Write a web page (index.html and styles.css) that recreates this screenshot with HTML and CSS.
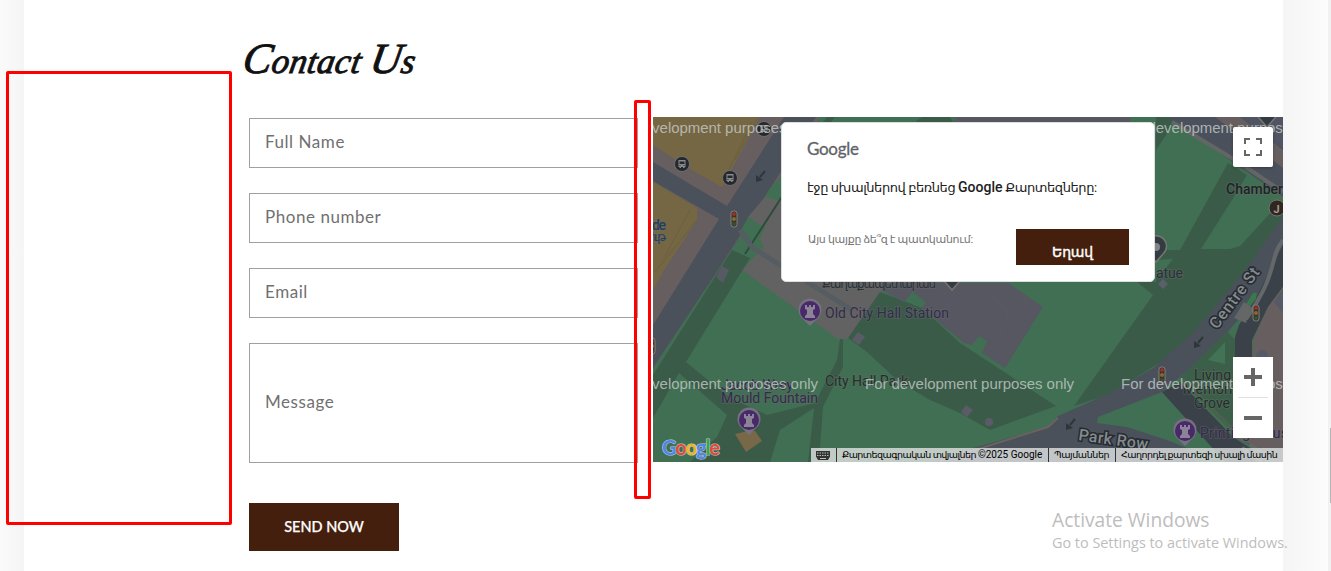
FILE: index.html
```html
<!DOCTYPE html>
<html lang="en">
<head>
<meta charset="utf-8">
<title>Contact Us</title>
<link rel="stylesheet" href="styles.css">
</head>
<body>
<div class="shell">
  <div class="gutter gutter-left"></div>
  <main class="page">
    <h1 class="title"><span class="cap">C</span>ontact <span class="cap">U</span>s</h1>
    <div class="contact">
      <form class="form">
        <input class="field" type="text" placeholder="Full Name">
        <input class="field" type="text" placeholder="Phone number">
        <input class="field" type="text" placeholder="Email">
        <input class="field field-message" type="text" placeholder="Message">
        <button class="send" type="button">SEND NOW</button>
      </form>
      <section class="map">
        <svg class="canvas" viewBox="653 117 630 345" width="630" height="345">
          <defs>
            <g id="rook"><path d="M0 15 L-7 8 A11.5 11.5 0 1 1 7 8Z" fill="#77707f"/><circle r="10" fill="#482a6b"/><path d="M-5-6h2v2h2v-2h2v2h2v-2h2v4l-2 1v4l2 2v2h-10v-2l2-2v-4l-2-1z" fill="#8c8396"/></g>
            <g id="bus"><circle r="7.5" fill="#25292f" stroke="#777" stroke-width=".8"/><path d="M-3.500-4h7v7h-1v1h-1.500v-1h-2v1h-1.500v-1h-1z" fill="#8b8b8b"/><path d="M-2.500-2.500h5v2.500h-5zM-2.500 1h1v1h-1zM1.500 1h1v1h-1z" fill="#25292f"/></g>
            <g id="light"><rect x="-3" y="-8" width="6" height="16" rx="2.500" fill="#333" stroke="#8b8174"/><circle cy="-5" r="2" fill="#913330"/><circle r="2" fill="#8b6b20"/><circle cy="5" r="2" fill="#37503d"/></g>
            <g id="arrow"><path d="M5-6L0 0" fill="none" stroke="#30353b" stroke-width="2"/><path d="M-4-2L-4 5L3 3Z" fill="#30353b"/></g>
            <g id="pin"><path d="M0 15 L-7 7 A10.500 10.500 0 1 1 7 7Z" fill="#343c43" stroke="#77756f" stroke-width="1.500"/><circle r="4" fill="#858585"/></g>
          </defs>
          <rect x="653" y="117" width="630" height="345" fill="#416f53"/>

          <path d="M653 117H820L653 368Z" fill="#675f5f"/>
          <path d="M653 117H760L722 187L697 173L653 145ZM653 182L697 208V220L664 270L653 290Z" fill="#766744"/>
          <path d="M735 160L758 117M725 178L752 122M664 258L690 210M655 272L697 220" stroke="#6b603f" fill="none"/>
          <path d="M784 117H816L718 270L653 368V325L719 219L653 181V162L727 206Z" fill="#4a515b"/>
          <path d="M922 117H950L953 122H915ZM835 117L831 122H823L827 117Z" fill="#3b5b49"/>
          <path d="M957 117H1130V122H953Z" fill="#565761"/>
          <path d="M781 178L748 217L764 247L742 270L838 339H850L880 292L940 282V170Z" fill="#626262"/>
          <path d="M770 188L781 178V201L765 197ZM748 217L765 228L756 245L740 232Z" fill="#416f53"/>
          <path d="M745 254L783 195" stroke="#2f4b3b" stroke-width="2"/>
          <path d="M740 230L752 247L780 265L852 310" fill="none" stroke="#555d62" stroke-width="5"/>
          <path d="M732 250L750 258L686 362L730 398L767 415L815 403L837 360L840 339H843V367L823 407L819 462H808L814 408L780 430L770 462H690L717 437L727 415L679 373L653 418V375Z" fill="#3b5b49"/>
          <path d="M722 266L729 270L723 283L716 277Z" fill="#575a62"/>
          <path d="M848 338L880 292L922 308L960 343L1056 406L990 430L960 413L930 400L897 380L867 352Z" fill="#3b5b49"/>
          <path d="M882 283H1008L1043 307L1005 368L982 353L987 341L979 336L972 345L964 343L922 308L926 302L913 292L904 302L882 290Z" fill="#565761"/>
          <path d="M1020 290L1031 309L1005 350M990 295L1008 313L998 340" fill="none" stroke="#5a5a64"/>
          <path d="M858 332L865 337L859 345L852 340ZM966 405L973 410L967 417L961 412Z" fill="#595c66"/><circle cx="989" cy="422" r="4" fill="#595c66"/>
          <path d="M1228 163L1180 250H1156V282H1137L1153 295L1074 406L1110 394L1203 335L1283 240V213L1275 208L1240 246L1230 249H1201L1232 200L1247 175Z" fill="#3b5b49"/>
          <path d="M1156 117H1178L1156 150Z" fill="#3b5b49"/>
          <path d="M1156 260L1173 259L1161 274H1156Z" fill="#416f53"/>
          <path d="M1168 117H1283V197Z" fill="#4b515c"/>
          <path d="M1215 117H1240L1283 150V168Z" fill="#675f5f"/>
          <path d="M1240 117H1283V149Z" fill="#505463"/>
          <path d="M1172 122L1240 163L1283 192" fill="none" stroke="#626664" stroke-width="4"/>
          <path d="M1283 217L1245 270L1193 333L1153 368L1110 393L1058 416L1048 427L973 448L930 462H1195L1187 448L1167 440L1127 427L1097 423L1098 417L1162 392L1185 373L1223 337L1283 270Z" fill="#4a515b"/>
          <path d="M940 461L1048 427L1058 418" fill="none" stroke="#6b6260" stroke-width="2"/>
          <path d="M1180 378L1227 331L1240 345V437Z" fill="#3c5f4a"/>
          <path d="M1162 392L1180 382L1233 437L1250 448L1265 462H1225Z" fill="#3a4149"/>
          <path d="M1183 380L1236 433L1275 462" fill="none" stroke="#48624f" stroke-width="4"/>
          <path d="M1242 448L1262 462M1250 444L1275 462" fill="none" stroke="#686664" stroke-width="4"/>
          <path d="M1283 245L1255 300L1239 325L1235 337V357H1252V340L1268 307L1283 287Z" fill="#3a4149"/>
          <path d="M1283 287L1268 307L1253 340V357H1235V438L1262 448L1278 462H1283Z" fill="#675f5f"/>
          <path d="M1283 289L1274 302L1283 313Z" fill="#565966"/><circle cx="1262" cy="356" r="6" fill="#565966"/>
          <path d="M1208 360L1225 342V364Z" fill="#427354"/>
          <path d="M1283 240C1268 260 1280 270 1246 319" fill="none" stroke="#65686a" stroke-width="4"/>
          <path d="M1246 304L1253 293L1257 293L1256 299L1250 306Z" fill="#38794e"/><path d="M1234 318L1244 302L1251 307L1246 323Z" fill="#646766"/>
          <path d="M748 431L755 431L762 441L746 452L735 434Z" fill="#786848"/>
          <path d="M1163 279L1168 284L1163 289L1158 284Z" fill="#5c5e6c"/>

          <use href="#bus" x="764" y="129"/><use href="#bus" x="682" y="164"/><use href="#bus" x="730" y="178"/>
          <use href="#light" x="734" y="219"/><use href="#light" x="1162" y="375"/><use href="#light" x="1256" y="313"/><use href="#light" x="652" y="346"/>
          <use href="#arrow" x="760" y="177"/><use href="#arrow" x="1198" y="343"/><use href="#arrow" x="1070" y="425"/>
          <use href="#pin" x="1156" y="247"/><use href="#pin" x="952" y="275"/><use href="#pin" x="1267" y="112"/>
          <use href="#rook" x="810" y="311"/><use href="#rook" x="749" y="420"/><use href="#rook" x="1185" y="431"/>
          <circle cx="1277" cy="208" r="8" fill="#302820" stroke="#77716b"/><text x="1273.500" y="213" class="label letter">J</text>

          <text x="646" y="230" class="label blue" textLength="20">ade</text>
          <text x="643" y="241" class="label blue armenian" textLength="23">րութ</text>
          <text x="822" y="288" class="label armenian" textLength="114">Քաղաքապետարան</text>
          <text x="825" y="318" class="label violet" textLength="124">Old City Hall Station</text>
          <text x="825" y="386" class="label dark" textLength="83">City Hall Park</text>
          <text x="721" y="390" class="label violet" textLength="72">Jacob Wrey</text>
          <text x="721" y="403" class="label violet" textLength="97">Mould Fountain</text>
          <text x="1226" y="194" class="label strong" textLength="57">Chamber</text>
          <text x="1156" y="278" class="label" textLength="27">atue</text>
          <text x="1194" y="380" class="label dark" textLength="37">Living</text>
          <text x="1183" y="394" class="label dark" textLength="61">Memorial</text>
          <text x="1194" y="408" class="label dark" textLength="36">Grove</text>
          <text x="1200" y="438" class="label violet" textLength="88">Printing Hous</text>
          <text transform="translate(1217 330) rotate(-53)" class="label street" textLength="72">Centre St</text>
          <text transform="translate(1078 440) rotate(8)" class="label street" textLength="70">Park Row</text>

          <g class="watermark">
            <text x="609" y="132.500" textLength="209">For development purposes only</text>
            <text x="865" y="132.500" textLength="209">For development purposes only</text>
            <text x="1121" y="132.500" textLength="209">For development purposes only</text>
            <text x="609" y="388.500" textLength="209">For development purposes only</text>
            <text x="865" y="388.500" textLength="209">For development purposes only</text>
            <text x="1121" y="388.500" textLength="209">For development purposes only</text>
          </g>
          <text x="662" y="455" class="google-mark" textLength="58"><tspan fill="#4f85ee">G</tspan><tspan fill="#e2493d">o</tspan><tspan fill="#f0b41c">o</tspan><tspan fill="#4f85ee">g</tspan><tspan fill="#35a456">l</tspan><tspan fill="#e2493d">e</tspan></text>
        </svg>

        <div class="dialog">
          <div class="dialog-logo">Google</div>
          <p class="dialog-text">էջը սխալներով բեռնեց <b>Google</b> Քարտեզները:</p>
          <div class="dialog-actions">
            <span class="dialog-link">Այս կայքը ձե՞զ է պատկանում:</span>
            <button class="dialog-ok" type="button">Եղավ</button>
          </div>
        </div>
        <button class="fullscreen" type="button" aria-label="Fullscreen">
          <svg width="18" height="18" viewBox="0 0 18 18"><path d="M0 0h6v2H2v4H0zM12 0h6v6h-2V2h-4zM0 12h2v4h4v2H0zM16 12h2v6h-6v-2h4z" fill="#666"/></svg>
        </button>
        <div class="zoom">
          <button class="zoom-btn" type="button" aria-label="Zoom in"><svg width="18" height="18" viewBox="0 0 18 18"><path d="M7 0h4v7h7v4h-7v7H7v-7H0V7h7z" fill="#666"/></svg></button>
          <div class="zoom-rule"></div>
          <button class="zoom-btn" type="button" aria-label="Zoom out"><svg width="18" height="4" viewBox="0 0 18 4"><path d="M0 0h18v4H0z" fill="#666"/></svg></button>
        </div>
        <div class="credits">
          <span class="credit keys"><svg width="14" height="9" viewBox="0 0 14 9"><path d="M0 0h14v5.500l-2 3.500H2L0 5.500z" fill="#333"/><path d="M1 2h12M1 4.500h12" stroke="#b9c1be" stroke-dasharray="1.500 1"/><path d="M4 7.500h6" stroke="#b9c1be"/></svg></span>
          <span class="credit data">Քարտեզագրական տվյալներ <span class="latin">©2025 Google</span></span>
          <span class="credit terms">Պայմաններ</span>
          <span class="credit report">Հաղորդել քարտեզի սխալի մասին</span>
        </div>
      </section>
    </div>
  </main>
  <div class="gutter gutter-right"></div>
  <div class="scrollbar"><div class="thumb"></div></div>
</div>
<div class="marker marker-wide"></div>
<div class="marker marker-narrow"></div>
<div class="activation"><div class="activation-title">Activate Windows</div><div class="activation-text">Go to Settings to activate Windows.</div></div>
</body>
</html>
```
FILE: styles.css
```css
* { box-sizing: border-box; }
body { margin: 0; background: #fff; font-family: Lato, sans-serif; overflow: hidden; }
.shell { display: flex; width: 1331px; height: 571px; }
.gutter-left { width: 24px; background: linear-gradient(to right, #fafafa, #f5f5f5); }
.gutter-right { width: 45px; background: linear-gradient(to right, #f5f5f5, #fcfcfc); }
.scrollbar { width: 3px; background: #f1f1f1; padding: 428px 0 0 2px; }
.thumb { height: 75px; background: #b5b5b5; }
.page { width: 1259px; }
.title { margin: 0; height: 117px; padding: 34px 0 0 217px; font: italic 400 35px/50px "Liberation Serif", serif; letter-spacing: .3px; color: #111; white-space: nowrap; -webkit-text-stroke: .9px #111; transform: skewX(-10deg); transform-origin: 0 74px; }
.cap { font-size: 43px; line-height: 50px; }
.contact { display: flex; gap: 15px; padding-left: 225px; }
.form { width: 389px; padding-top: 1px; display: flex; flex-direction: column; gap: 25px; align-items: flex-start; }
.field { width: 389px; height: 50px; border: 1px solid #a0a0a0; padding: 0 15px 3px; margin: 0; font: 17px Lato, sans-serif; letter-spacing: .55px; background: #fff; }
.field::placeholder { color: #707070; opacity: 1; }
.field-message { height: 120px; }
.send { width: 150px; height: 48px; margin-top: 15px; padding: 0 0 1px; border: 0; background: #451f0d; color: #fff; font: 500 14.500px Lato, sans-serif; -webkit-text-stroke: .25px #fff; }
.map { position: relative; width: 630px; height: 345px; overflow: hidden; }
.canvas { display: block; }

.label { font: 14px Roboto, sans-serif; fill: #2b3138; stroke: #666c6b; stroke-width: 1.500px; paint-order: stroke; stroke-opacity: .55; }
.violet { fill: #352a4d; }
.dark { fill: #223128; }
.blue { fill: #243d5c; font-weight: 500; }
.strong { fill: #1f2226; font-weight: 500; }
.letter { fill: #a09b96; stroke: none; font-weight: 700; font-size: 11px; }
.armenian { font: 12px "Noto Sans", "DejaVu Sans", sans-serif; }
.street { font-size: 16px; font-weight: 500; fill: #858a8e; stroke: #262b31; stroke-width: 3px; stroke-opacity: 1; }
.watermark { font: 15px "Liberation Sans", sans-serif; fill: #c5ccc8; fill-opacity: .8; }
.google-mark { font: 700 20px Lato, sans-serif; stroke: #b7c8bd; stroke-width: 1.200px; paint-order: stroke; }

.dialog { position: absolute; left: 128px; top: 5px; width: 374px; height: 160px; padding: 15px 25px; background: #fff; border: 1px solid #ddd; border-radius: 5px; white-space: nowrap; }
.dialog-logo { height: 22px; font: 17px/22px Lato, sans-serif; letter-spacing: -.3px; color: #5f6368; -webkit-text-stroke: .3px #5f6368; }
.dialog-text { margin: 17px 0 0; font: 13px/20px Roboto, "Noto Sans", "DejaVu Sans", sans-serif; letter-spacing: -.42px; color: #212121; }
.dialog-text b { font-size: 14px; font-weight: 500; letter-spacing: 0; }
.dialog-actions { display: flex; justify-content: space-between; margin-top: 31px; }
.dialog-link { padding: 1px 0 0 1px; font: 11px/20px Roboto, "Noto Sans", "DejaVu Sans", sans-serif; letter-spacing: -.3px; color: #757575; }
.dialog-ok { width: 113px; height: 36px; padding: 10px 0 0; border: 0; background: #451f0d; color: #fff; font: 500 14px Roboto, "Noto Sans", "DejaVu Sans", sans-serif; letter-spacing: -.2px; -webkit-text-stroke: .4px #fff; }
.fullscreen { position: absolute; left: 580px; top: 10px; width: 40px; height: 40px; padding: 0; border: 0; border-radius: 2px; background: #fff; display: grid; place-items: center; box-shadow: 0 1px 3px rgba(0,0,0,.3); }
.zoom { position: absolute; left: 580px; top: 240px; width: 40px; height: 81px; background: #fff; }
.zoom-btn { width: 40px; height: 40px; padding: 0; border: 0; background: none; display: grid; place-items: center; }
.zoom-rule { height: 1px; margin: 0 5px; background: #e2e2e2; }
.credits { position: absolute; left: 158px; top: 331px; width: 472px; height: 14px; display: flex; font: 9.500px/14px Roboto, "Noto Sans", "DejaVu Sans", sans-serif; letter-spacing: -.54px; color: #000; white-space: nowrap; }
.latin { font-size: 10px; letter-spacing: 0; }
.credit { background: rgba(225,228,228,.8); border-right: 1px solid #333; padding-left: 5px; }
.keys { width: 26px; display: flex; align-items: center; }
.data { width: 212px; }
.terms { width: 67px; letter-spacing: -.4px; }
.report { width: 167px; border: 0; }

.marker { position: absolute; border: 3px solid #f00; border-radius: 2px; }
.marker-wide { left: 6px; top: 71px; width: 226px; height: 454px; }
.marker-narrow { left: 634px; top: 100px; width: 17px; height: 399px; }
.activation { position: absolute; left: 1052px; top: 508px; color: #bdbdbd; font-family: "Open Sans", sans-serif; white-space: nowrap; }
.activation-title { font-size: 19.200px; line-height: 24px; }
.activation-text { font-size: 14.400px; line-height: 21px; }
```
